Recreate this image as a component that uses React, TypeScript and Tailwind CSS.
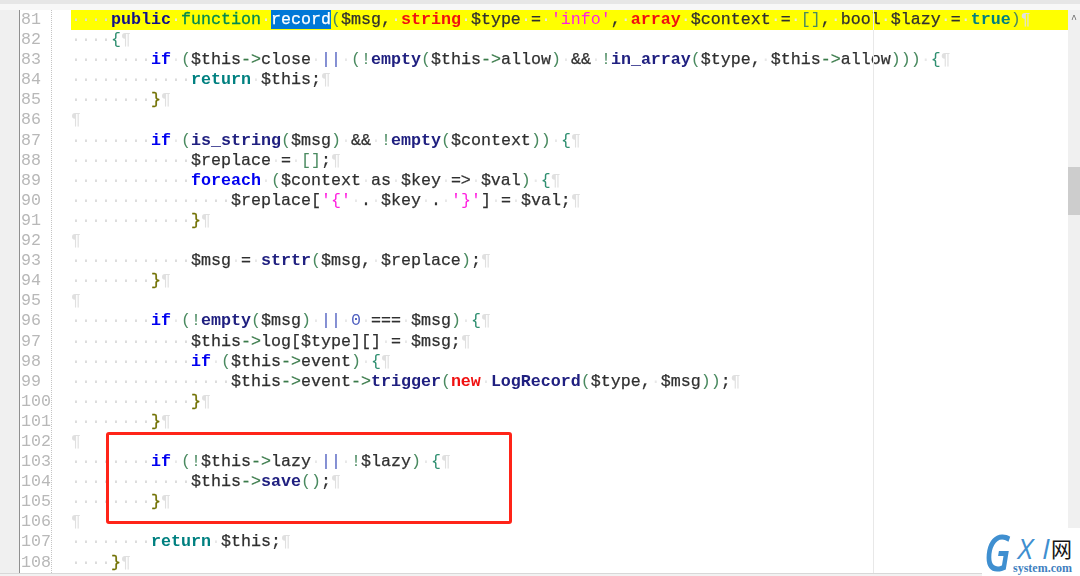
const KW = "text-[#0000f0] font-bold";
const DECL = "text-[#10108a] font-bold";
const FN = "text-[#008a50] [-webkit-text-stroke:0.3px]";
const RET = "text-[#008080] font-bold";
const TYPE = "text-[#f01010] font-bold";
const STR = "text-[#ff20e0]";
const CALL = "text-[#202080] font-bold";
const P = "text-[#4a8a60]";
const B = "text-[#2f8f70]";
const BR = "text-[#707000] [-webkit-text-stroke:0.3px]";
const V = "text-[#303030] [-webkit-text-stroke:0.25px]";
const NUM = "text-[#5060c0]";
const SEL = "bg-[#0078d7] text-white [-webkit-text-stroke:0.25px]";

type Tok = [string, string];

const LINES: { indent: number; toks: Tok[]; hl?: boolean }[] = [
  {
    indent: 4,
    hl: true,
    toks: [
      ["public", DECL], [" ", V], ["function", FN], [" ", V], ["record", SEL], ["(", P], ["$msg, ", V],
      ["string", TYPE], [" $type = ", V], ["'info'", STR], [", ", V], ["array", TYPE], [" $context = ", V],
      ["[]", P], [", bool $lazy = ", V], ["true", RET], [")", P],
    ],
  },
  { indent: 4, toks: [["{", B]] },
  {
    indent: 8,
    toks: [
      ["if", KW], [" ", V], ["(", P], ["$this->close ", V], ["||", NUM], [" ", V], ["(!", P], ["empty", CALL], ["(", P],
      ["$this->allow", V], [")", P], [" && ", V], ["!", P], ["in_array", CALL], ["(", P], ["$type, $this->allow", V],
      ["))) ", P], ["{", B],
    ],
  },
  { indent: 12, toks: [["return", RET], [" $this;", V]] },
  { indent: 8, toks: [["}", BR]] },
  { indent: 0, toks: [] },
  {
    indent: 8,
    toks: [
      ["if", KW], [" ", V], ["(", P], ["is_string", CALL], ["(", P], ["$msg", V], [")", P], [" && ", V], ["!", P], ["empty", CALL],
      ["(", P], ["$context", V], [")) ", P], ["{", B],
    ],
  },
  { indent: 12, toks: [["$replace = ", V], ["[]", P], [";", V]] },
  {
    indent: 12,
    toks: [["foreach", KW], [" ", V], ["(", P], ["$context as $key => $val", V], [") ", P], ["{", B]],
  },
  {
    indent: 16,
    toks: [["$replace[", V], ["'{'", STR], [" . $key . ", V], ["'}'", STR], ["] = $val;", V]],
  },
  { indent: 12, toks: [["}", BR]] },
  { indent: 0, toks: [] },
  {
    indent: 12,
    toks: [["$msg = ", V], ["strtr", CALL], ["(", P], ["$msg, $replace", V], [")", P], [";", V]],
  },
  { indent: 8, toks: [["}", BR]] },
  { indent: 0, toks: [] },
  {
    indent: 8,
    toks: [
      ["if", KW], [" ", V], ["(!", P], ["empty", CALL], ["(", P], ["$msg", V], [")", P], [" ", V], ["||", NUM], [" ", V], ["0", NUM],
      [" === $msg", V], [") ", P], ["{", B],
    ],
  },
  { indent: 12, toks: [["$this->log[$type][] = $msg;", V]] },
  {
    indent: 12,
    toks: [["if", KW], [" ", V], ["(", P], ["$this->event", V], [") ", P], ["{", B]],
  },
  {
    indent: 16,
    toks: [
      ["$this->event->", V], ["trigger", CALL], ["(", P], ["new", TYPE], [" ", V], ["LogRecord", CALL], ["(", P],
      ["$type, $msg", V], ["))", P], [";", V],
    ],
  },
  { indent: 12, toks: [["}", BR]] },
  { indent: 8, toks: [["}", BR]] },
  { indent: 0, toks: [] },
  {
    indent: 8,
    toks: [["if", KW], [" ", V], ["(!", P], ["$this->lazy ", V], ["||", NUM], [" ", V], ["!", P], ["$lazy", V], [") ", P], ["{", B]],
  },
  { indent: 12, toks: [["$this->", V], ["save", CALL], ["()", P], [";", V]] },
  { indent: 8, toks: [["}", BR]] },
  { indent: 0, toks: [] },
  { indent: 8, toks: [["return", RET], [" $this;", V]] },
  { indent: 4, toks: [["}", BR]] },
];

function Dots({ n, faint }: { n: number; faint?: boolean }) {
  return (
    <span className={faint ? "text-[#e8e8e8] [-webkit-text-stroke:0px]" : "text-[#dcdcdc]"}>{"·".repeat(n)}</span>
  );
}

function Token({ text, cls }: { text: string; cls: string }) {
  return (
    <span className={cls}>
      {text.split(/( |->)/).map((part, i) => {
        if (part === " ") return <Dots key={i} n={1} faint />;
        if (part === "->") return <span key={i} className="text-[#3a7a4a]">{part}</span>;
        return part;
      })}
    </span>
  );
}

export default function App() {
  return (
    <div className="relative flex h-[576px] w-[1080px] flex-col overflow-hidden bg-white font-['Liberation_Mono',monospace] text-[16.67px]">
      <div className="h-[10px] shrink-0 border-t-[4px] border-[#e6e6e6] bg-[#f7f7f7]" />
      <div className="flex h-[563px] shrink-0 overflow-hidden blur-[0.5px]">
        <div className="w-[20px] shrink-0 border-r border-[#909090] bg-[#f0f0f0]" />
        <div className="w-[32px] shrink-0 border-r border-dotted border-[#c4c4c4] pl-px">
          {LINES.map((_, i) => (
            <div key={i} className="h-[20.1px] leading-[20.1px] text-[#b8b8b8]">
              {81 + i}
            </div>
          ))}
        </div>
        <div className="min-w-0 flex-1 pl-[19px]">
          {LINES.map((line, i) => (
            <div
              key={i}
              className={
                line.hl
                  ? "h-[20.1px] whitespace-pre bg-[#ffff00] leading-[20.1px]"
                  : "h-[20.1px] whitespace-pre leading-[20.1px]"
              }
            >
              <Dots n={line.indent} />
              {line.toks.map((t, j) => (
                <Token key={j} text={t[0]} cls={t[1]} />
              ))}
              <span className="text-[#e0e0e0]">¶</span>
            </div>
          ))}
        </div>
        <div className="flex w-[12px] shrink-0 flex-col bg-[#f0f0f0]">
          <div className="flex h-[20px] items-center justify-center text-[10px] leading-none text-[#606060]">^</div>
          <div className="mt-[137px] h-[48px] bg-[#cdcdcd]" />
        </div>
      </div>
      <div className="flex-1 border-t border-[#d8d8d8] bg-[#f2f2f2]" />

      {/* edge column marker */}
      <div className="absolute bottom-[3px] left-[873px] top-[10px] w-px bg-[#e8e8e8]" />

      {/* red annotation box */}
      <div className="absolute left-[106px] top-[432px] h-[92px] w-[406px] rounded-[3px] border-[3px] border-[#ff2418]" />

      {/* watermark */}
      <div className="absolute bottom-0 right-0 h-[48px] w-[98px] bg-white font-['Open_Sans',sans-serif]">
        <span className="absolute left-[2px] top-[2px] origin-left scale-x-[0.78] text-[50px] font-semibold italic leading-[44px] text-[#3f8fd0]">G</span>
        <span className="absolute left-[36px] top-[9px] text-[28px] font-medium italic leading-[22px] text-[#3f8fd0]">X</span>
        <span className="absolute left-[60px] top-[9px] text-[28px] font-medium italic leading-[22px] text-[#3f8fd0]">I</span>
        <span className="absolute left-[69px] top-[9px] font-['Noto_Sans_CJK_SC',sans-serif] text-[21px] leading-[22px] text-[#151515]">网</span>
        <span className="absolute left-[31px] top-[34px] font-['Liberation_Serif',serif] text-[12px] font-bold leading-[12px] text-[#3f7fc0]">system.com</span>
      </div>
    </div>
  );
}
